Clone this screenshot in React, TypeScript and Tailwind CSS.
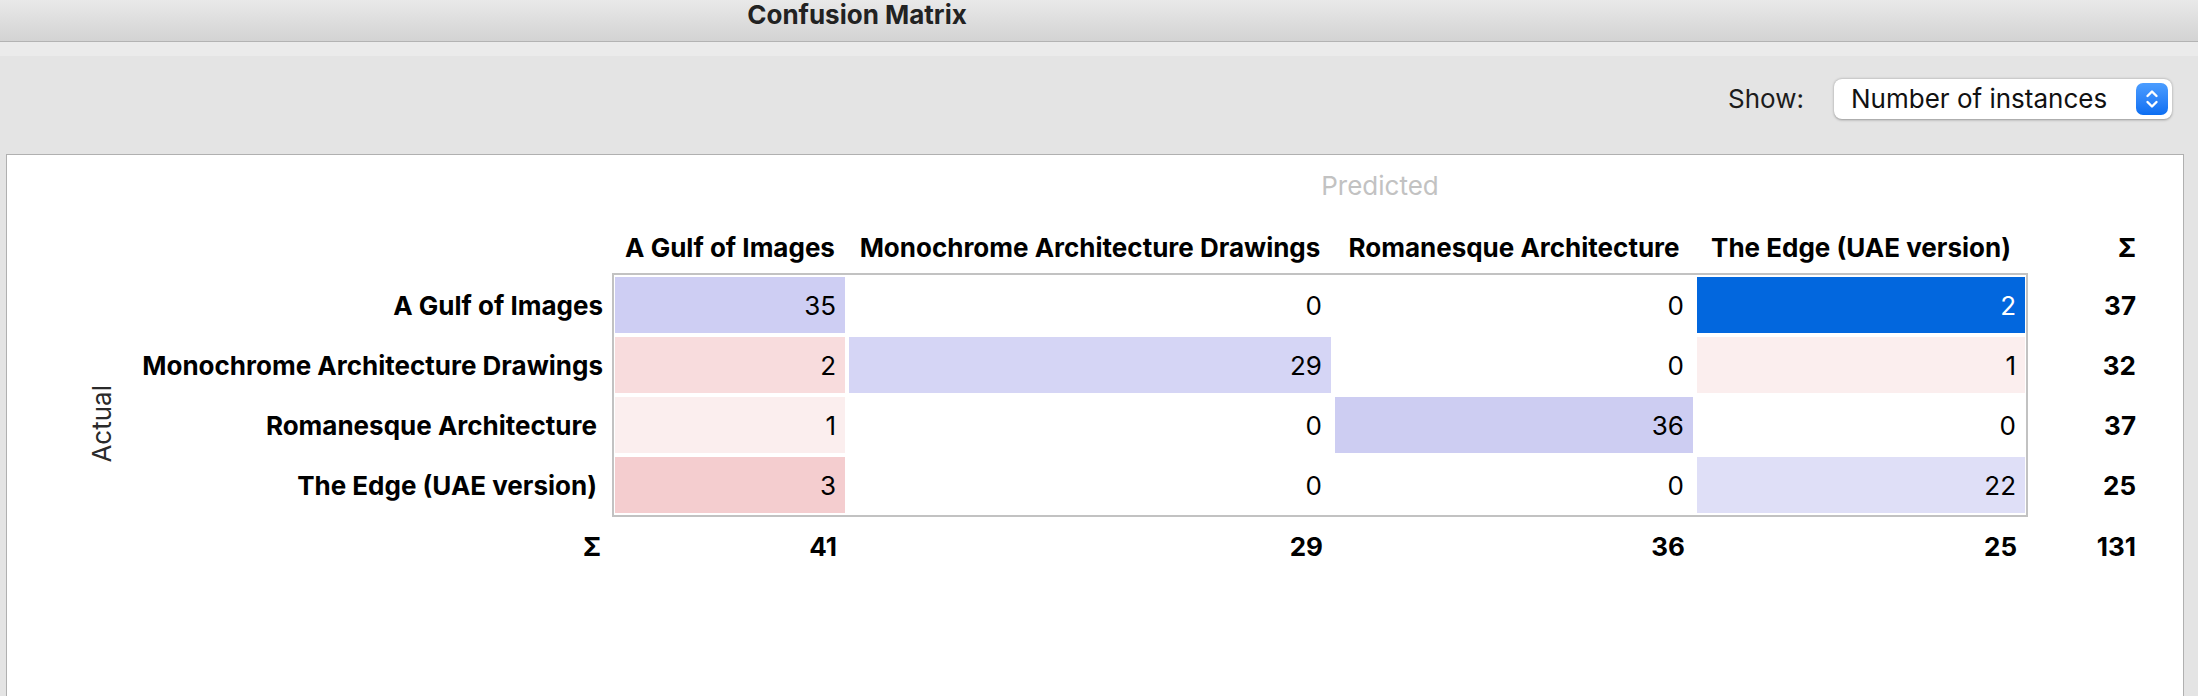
import React from "react";

type Cell = { value: number; bg: string; fg?: string };

const columns = [
  { name: "A Gulf of Images", width: "w-[230px]" },
  { name: "Monochrome Architecture Drawings", width: "w-[482px]" },
  { name: "Romanesque Architecture", width: "w-[358px]" },
  { name: "The Edge (UAE version)", width: "w-[328px]" },
];

const rows: { label: string; pad: string; sum: number; cells: Cell[] }[] = [
  {
    label: "A Gulf of Images",
    pad: "pr-[9px]",
    sum: 37,
    cells: [
      { value: 35, bg: "bg-[#cecef3]" },
      { value: 0, bg: "bg-white" },
      { value: 0, bg: "bg-white" },
      { value: 2, bg: "bg-[#0267de]", fg: "text-white" },
    ],
  },
  {
    label: "Monochrome Architecture Drawings",
    pad: "pr-[9px]",
    sum: 32,
    cells: [
      { value: 2, bg: "bg-[#f8dcdd]" },
      { value: 29, bg: "bg-[#d5d5f5]" },
      { value: 0, bg: "bg-white" },
      { value: 1, bg: "bg-[#fbeeee]" },
    ],
  },
  {
    label: "Romanesque Architecture",
    pad: "pr-[15px]",
    sum: 37,
    cells: [
      { value: 1, bg: "bg-[#fbeeee]" },
      { value: 0, bg: "bg-white" },
      { value: 36, bg: "bg-[#cdcdf2]" },
      { value: 0, bg: "bg-white" },
    ],
  },
  {
    label: "The Edge (UAE version)",
    pad: "pr-[15px]",
    sum: 25,
    cells: [
      { value: 3, bg: "bg-[#f4cdcf]" },
      { value: 0, bg: "bg-white" },
      { value: 0, bg: "bg-white" },
      { value: 22, bg: "bg-[#dfdff7]" },
    ],
  },
];

const colSums = [41, 29, 36, 25];

const Stepper = () => (
  <div className="w-[32px] h-[32px] rounded-[7px] bg-linear-to-b from-[#4b9dff] to-[#0a6ef2] flex items-center justify-center">
    <svg width="32" height="32" viewBox="0 0 32 32" fill="none">
      <path
        d="M11.5 13 L16 8.5 L20.5 13"
        stroke="white"
        strokeWidth="2.4"
        strokeLinecap="round"
        strokeLinejoin="round"
      />
      <path
        d="M11.5 19 L16 23.5 L20.5 19"
        stroke="white"
        strokeWidth="2.4"
        strokeLinecap="round"
        strokeLinejoin="round"
      />
    </svg>
  </div>
);

export default function App() {
  return (
    <div className="h-screen flex flex-col bg-[#e4e4e4] [font-family:Inter,'Noto_Sans',sans-serif] text-black overflow-hidden">
      {/* title bar */}
      <div className="h-[42px] shrink-0 border-b border-[#b3b3b3] bg-linear-to-b from-[#e9e9e9] to-[#d3d3d3]">
        <div className="w-[1714px] h-[30px] leading-[30px] text-center text-[26px] font-bold text-[#222]">
          Confusion Matrix
        </div>
      </div>

      {/* toolbar */}
      <div className="h-[112px] shrink-0">
        <div className="h-[14px] bg-[#ebebeb]" />
        <div className="pt-[23px] pr-[26px] flex justify-end items-center gap-[30px]">
          <span className="text-[26px] leading-[40px] text-[#1c1c1c]">Show:</span>
          <div className="w-[338px] h-[40px] rounded-[8px] bg-white shadow-[0_0.5px_2.5px_rgba(0,0,0,0.35)] flex items-center justify-between pl-[17px] pr-[4px]">
            <span className="text-[26px] leading-[40px] text-[#111]">Number of instances</span>
            <Stepper />
          </div>
        </div>
      </div>

      {/* white panel */}
      <div className="flex-1 ml-[6px] mr-[14px] bg-white border border-b-0 border-[#b0b0b0] pt-[15px]">
        <div className="flex pl-[605px]">
          <div className="w-[1536px] h-[32px] leading-[32px] text-center text-[26px] text-[#c2c2c2]">
            Predicted
          </div>
        </div>

        <div className="flex mt-[19px]">
          {/* Actual */}
          <div className="pl-[79px] w-[111px] h-[406px] flex items-center">
            <span className="[writing-mode:vertical-rl] rotate-180 text-[26px] leading-[32px] text-[#2a2a2a]">
              Actual
            </span>
          </div>

          {/* row labels */}
          <div className="w-[494px] flex flex-col items-stretch">
            <div className="h-[52px]" />
            <div className="mt-[4px] flex flex-col gap-[4px]">
              {rows.map((r) => (
                <div
                  key={r.label}
                  className={`h-[56px] flex items-center justify-end text-[26px] font-bold whitespace-nowrap ${r.pad}`}
                >
                  {r.label}
                </div>
              ))}
            </div>
            <div className="mt-[4px] h-[58px] flex items-center justify-end pr-[11px] text-[26px] font-bold">
              Σ
            </div>
          </div>

          {/* matrix */}
          <div className="flex flex-col">
            <div className="h-[52px] flex gap-[4px] pl-[3px]">
              {columns.map((c) => (
                <div
                  key={c.name}
                  className={`${c.width} flex items-center justify-center text-[26px] font-bold whitespace-nowrap`}
                >
                  {c.name}
                </div>
              ))}
            </div>
            <div className="border-2 border-[#c2c2c2] px-px py-[2px] flex flex-col gap-[4px]">
              {rows.map((r) => (
                <div key={r.label} className="flex gap-[4px]">
                  {r.cells.map((cell, i) => (
                    <div
                      key={i}
                      className={`${columns[i].width} ${cell.bg} ${cell.fg ?? "text-black"} h-[56px] flex items-center justify-end pr-[9px] text-[26px]`}
                    >
                      {cell.value}
                    </div>
                  ))}
                </div>
              ))}
            </div>
            <div className="h-[58px] flex gap-[4px] pl-[3px]">
              {colSums.map((s, i) => (
                <div
                  key={i}
                  className={`${columns[i].width} flex items-center justify-end pr-[8px] text-[26px] font-bold`}
                >
                  {s}
                </div>
              ))}
            </div>
          </div>

          {/* row sums */}
          <div className="w-[108px] flex flex-col">
            <div className="h-[52px] flex items-center justify-end text-[26px] font-bold">Σ</div>
            <div className="mt-[4px] flex flex-col gap-[4px]">
              {rows.map((r) => (
                <div
                  key={r.label}
                  className="h-[56px] flex items-center justify-end text-[26px] font-bold"
                >
                  {r.sum}
                </div>
              ))}
            </div>
            <div className="mt-[4px] h-[58px] flex items-center justify-end text-[26px] font-bold">
              131
            </div>
          </div>
        </div>
      </div>
    </div>
  );
}
